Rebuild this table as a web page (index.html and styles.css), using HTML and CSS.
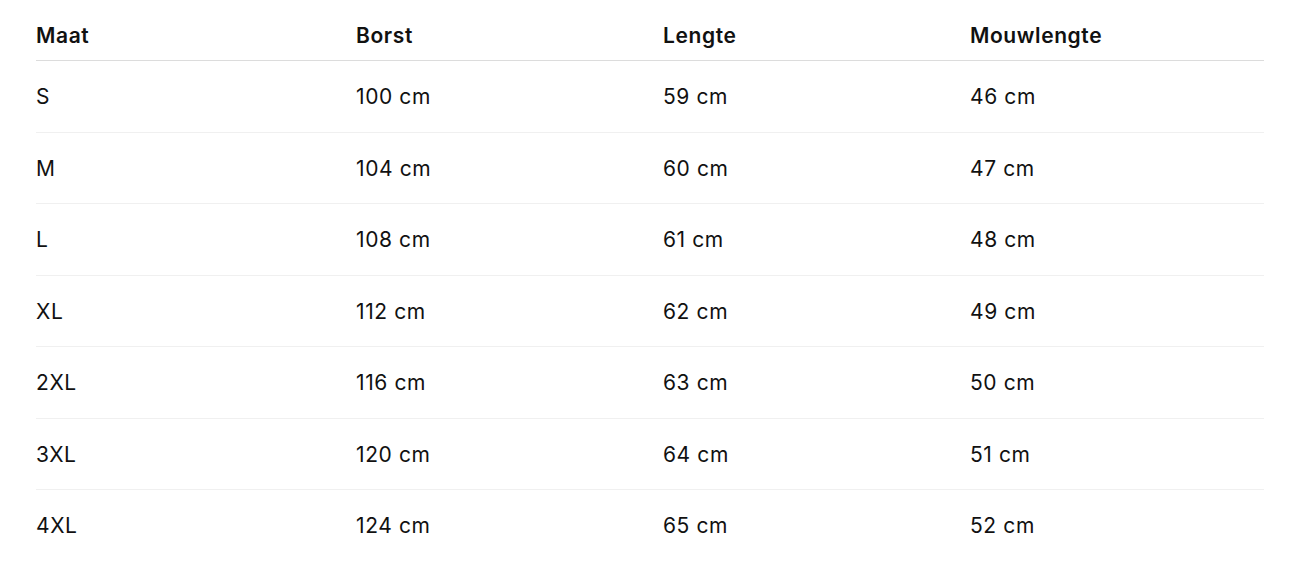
FILE: index.html
```html
<!DOCTYPE html>
<html lang="nl">
<head>
<meta charset="utf-8">
<title>Maattabel</title>
<link rel="stylesheet" href="styles.css">
</head>
<body>
<div class="wrap">
<table class="sizes">
<colgroup>
<col class="c1"><col class="c2"><col class="c3"><col class="c4">
</colgroup>
<thead>
<tr><th>Maat</th><th>Borst</th><th>Lengte</th><th>Mouwlengte</th></tr>
</thead>
<tbody>
<tr><td>S</td><td>100 cm</td><td>59 cm</td><td>46 cm</td></tr>
<tr><td>M</td><td>104 cm</td><td>60 cm</td><td>47 cm</td></tr>
<tr><td>L</td><td>108 cm</td><td>61 cm</td><td>48 cm</td></tr>
<tr><td>XL</td><td>112 cm</td><td>62 cm</td><td>49 cm</td></tr>
<tr><td>2XL</td><td>116 cm</td><td>63 cm</td><td>50 cm</td></tr>
<tr><td>3XL</td><td>120 cm</td><td>64 cm</td><td>51 cm</td></tr>
<tr><td>4XL</td><td>124 cm</td><td>65 cm</td><td>52 cm</td></tr>
</tbody>
</table>
</div>
</body>
</html>
```
FILE: styles.css
```css
html, body {
  margin: 0;
  padding: 0;
  background: #ffffff;
}
body {
  font-family: Inter, "Noto Sans", "Liberation Sans", sans-serif;
  color: #111111;
}
.wrap {
  padding: 12px 26px 0 36px;
}
.sizes {
  width: 1228px;
  border-collapse: collapse;
  table-layout: fixed;
}
.c1 { width: 320px; }
.c2 { width: 307px; }
.c3 { width: 307px; }
.c4 { width: 294px; }
.sizes th {
  text-align: left;
  font-weight: 600;
  font-size: 21px;
  letter-spacing: 0.6px;
  line-height: 23px;
  padding: 12px 0 13px;
  border-bottom: 1px solid #dcdcdc;
}
.sizes td {
  font-size: 21px;
  letter-spacing: 0.6px;
  line-height: 22.5px;
  padding: 25px 0 23px;
  font-weight: 400;
  border-bottom: 1px solid #f0f0f0;
}
.sizes tbody tr:last-child td {
  border-bottom: none;
}
```
